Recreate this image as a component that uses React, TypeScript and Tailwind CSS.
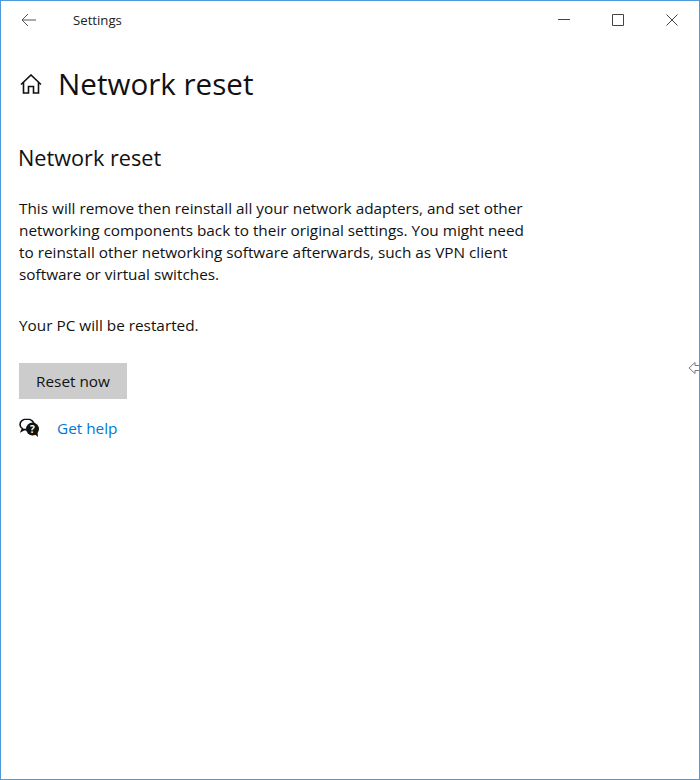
import React from 'react';

const font = { fontFamily: '"Open Sans", "Noto Sans", sans-serif' };

const App: React.FC = () => {
  return (
    <div
      className="w-[700px] h-[780px] overflow-hidden bg-white border border-[#4f9bd9] text-[#111] relative"
      style={font}
    >
      {/* Title bar */}
      <div className="flex items-center h-[37px] pl-[20px]">
        <svg width="16" height="14" viewBox="0 0 16 14" fill="none" stroke="#555" strokeWidth="1">
          <path d="M15 7H1M7 1L1 7l6 6" />
        </svg>
        <span className="ml-[36px] text-[13.2px] leading-[20px] pt-[1px] text-[#222]">Settings</span>
        <div className="ml-auto flex items-center gap-[42px] pr-[21px]">
          <svg width="12" height="12" viewBox="0 0 12 12" fill="none" stroke="#444" strokeWidth="1">
            <path d="M0 5.500h12" />
          </svg>
          <svg width="12" height="12" viewBox="0 0 12 12" fill="none" stroke="#444" strokeWidth="1">
            <path d="M.5.5h11v11H.5z" />
          </svg>
          <svg width="12" height="12" viewBox="0 0 12 12" fill="none" stroke="#444" strokeWidth="1">
            <path d="M.5.5l11 11M11.5.5l-11 11" />
          </svg>
        </div>
      </div>

      {/* Page title */}
      <div className="flex items-center mt-[26px] pl-[19px] h-[40px]">
        <svg width="22" height="20" viewBox="0 0 22 20" fill="none" stroke="#111" strokeWidth="1.6">
          <path d="M1 10.500L11 1l10 9.500M3.500 8.500V19h5v-6.500h5V19h5V8.500" />
        </svg>
        <h1 className="ml-[16px] text-[29.6px] leading-[40px] font-normal">Network reset</h1>
      </div>

      {/* Content */}
      <div className="pl-[18px] pt-[39px]">
        <h2 className="-ml-px text-[21.7px] leading-[30px] font-normal">Network reset</h2>
        <p className="mt-[24px] w-[530px] text-[15.33px] leading-[22px]">
          This will remove then reinstall all your network adapters, and set other
          <br />
          networking components back to their original settings. You might need
          <br />
          to reinstall other networking software afterwards, such as VPN client
          <br />
          software or virtual switches.
        </p>
        <p className="mt-[29px] text-[15.33px] leading-[22px]">Your PC will be restarted.</p>
        <button className="block mt-[27px] w-[108px] h-[36px] bg-[#cccccc] text-[15.33px] text-[#111]">
          Reset now
        </button>
        <div className="flex items-center mt-[17px] h-[24px]">
          <svg width="21" height="20" viewBox="0 0 21 20">
            <path
              d="M8 1C3.800 1 1 3.400 1 6.400c0 1.800 1 3.300 2.600 4.300L2.500 13l3.400-1.600c.7.2 1.400.2 2.100.2 3.800 0 7-2.200 7-5.200S11.800 1 8 1z"
              fill="#fff"
              stroke="#111"
              strokeWidth="1.6"
            />
            <circle cx="13.500" cy="11" r="6.500" fill="#111" />
            <path d="M16 16.500l3 2.500-.5-5z" fill="#111" />
            <text x="13.500" y="14.500" fontSize="10" fontWeight="700" fill="#fff" textAnchor="middle" style={font}>
              ?
            </text>
          </svg>
          <a className="ml-[17px] text-[15.33px] text-[#0078d7]">Get help</a>
        </div>
      </div>

      {/* Stray cursor */}
      <svg className="absolute left-[687px] top-[360px]" width="12" height="14" viewBox="0 0 12 14" fill="#fff" stroke="#777" strokeWidth="1">
        <path d="M7 1.500L1 7l6 5.500V9.500h5v-5H7z" />
      </svg>
    </div>
  );
};

export default App;
